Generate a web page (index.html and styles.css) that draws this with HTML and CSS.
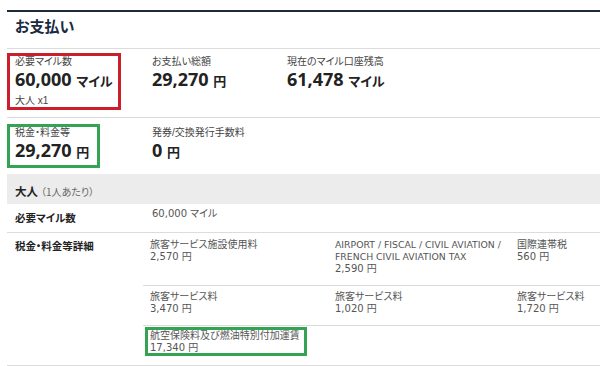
FILE: index.html
```html
<!DOCTYPE html>
<html lang="ja">
<head>
<meta charset="utf-8">
<link rel="stylesheet" href="styles.css">
</head>
<body>
<div class="page">
  <header class="head"><h1>お支払い</h1></header>

  <section class="sum-row r1">
    <div class="cell c1">
      <div class="box red">
        <div class="lbl">必要マイル数</div>
        <div class="num">60,000 <span class="unit">マイル</span></div>
        <div class="sub">大人 x1</div>
      </div>
    </div>
    <div class="cell c2 plain">
      <div class="lbl">お支払い総額</div>
      <div class="num">29,270 <span class="unit">円</span></div>
    </div>
    <div class="cell c3 plain">
      <div class="lbl">現在のマイル口座残高</div>
      <div class="num">61,478 <span class="unit">マイル</span></div>
    </div>
  </section>

  <section class="sum-row r2">
    <div class="cell c1">
      <div class="box green">
        <div class="lbl">税金・料金等</div>
        <div class="num">29,270 <span class="unit">円</span></div>
      </div>
    </div>
    <div class="cell c2 plain">
      <div class="lbl">発券/交換発行手数料</div>
      <div class="num">0 <span class="unit">円</span></div>
    </div>
  </section>

  <div class="band"><strong>大人</strong><span class="per">（1人あたり）</span></div>

  <section class="miles-row">
    <div class="rlabel">必要マイル数</div>
    <div class="rvalue">60,000 マイル</div>
  </section>

  <section class="detail">
    <div class="dlabel">税金・料金等詳細</div>
    <div class="dgrid">
      <div class="drow first">
        <div class="it"><div class="nm">旅客サービス施設使用料</div><div class="amt">2,570 円</div></div>
        <div class="it"><div class="nm en">AIRPORT / FISCAL / CIVIL AVIATION / FRENCH CIVIL AVIATION TAX</div><div class="amt">2,590 円</div></div>
        <div class="it"><div class="nm">国際連帯税</div><div class="amt">560 円</div></div>
      </div>
      <div class="drow">
        <div class="it"><div class="nm">旅客サービス料</div><div class="amt">3,470 円</div></div>
        <div class="it"><div class="nm">旅客サービス料</div><div class="amt">1,020 円</div></div>
        <div class="it"><div class="nm">旅客サービス料</div><div class="amt">1,720 円</div></div>
      </div>
      <div class="drow last">
        <div class="it boxed"><div class="gbox"><div class="nm">航空保険料及び燃油特別付加運賃</div><div class="amt">17,340 円</div></div></div>
      </div>
    </div>
  </section>
</div>
</body>
</html>
```

FILE: styles.css
```css
* { box-sizing: border-box; }
html, body { margin: 0; padding: 0; background: #fff; }
body {
  font-family: "Noto Sans CJK JP", sans-serif;
  font-feature-settings: "palt";
  color: #333;
  overflow: hidden;
}
.page {
  margin: 10px 0 0 7px;
}
.head {
  border-top: 2px solid #1d2a3a;
  border-bottom: 1px solid #dcdcdc;
  height: 39px;
  padding-left: 8px;
}
.head h1 {
  margin: 0;
  font-size: 15px;
  line-height: 28px;
  font-weight: 700;
  color: #1b2a3f;
}
.sum-row {
  display: flex;
  align-items: flex-start;
}
.r1 {
  height: 69px;
  padding-top: 4px;
  border-bottom: 1px solid #dcdcdc;
}
.r2 {
  height: 56px;
  padding-top: 6px;
}
.c1 { width: 145px; }
.c2 { width: 135px; }
.plain { padding-top: 3px; }
.box {
  display: inline-block;
  border: 3px solid;
  padding: 0 5px;
}
.red { border-color: #cc1f2c; }
.green { border-color: #34a353; padding-right: 8px; }
.lbl {
  font-family: "Liberation Sans", "Noto Sans CJK JP", sans-serif;
  font-size: 10px;
  line-height: 11px;
  color: #444;
}
.num {
  font-family: "Open Sans", "Noto Sans CJK JP", sans-serif;
  font-weight: 700;
  font-size: 18px;
  line-height: 25px;
  color: #222;
  white-space: nowrap;
}
.unit {
  font-size: 13px;
}
.sub {
  font-family: "Liberation Sans", "Noto Sans CJK JP", sans-serif;
  font-size: 10px;
  line-height: 12px;
  margin-top: 1px;
  color: #444;
}
.band {
  background: #ececec;
  height: 30px;
  line-height: 30px;
  padding-left: 8px;
}
.band strong {
  font-size: 11.5px;
  color: #222;
}
.band .per {
  font-size: 10px;
  color: #666;
  margin-left: 3px;
}
.miles-row {
  display: flex;
  height: 29px;
  border-bottom: 1px solid #dcdcdc;
}
.rlabel, .dlabel {
  width: 136px;
  padding-left: 8px;
  font-size: 10.5px;
  font-weight: 700;
  color: #222;
}
.rlabel { line-height: 28px; }
.rvalue {
  padding: 4px 0 0 9px;
  font-family: "DejaVu Sans", "Noto Sans CJK JP", sans-serif;
  font-size: 10px;
  line-height: 12px;
  color: #555;
}
.detail {
  display: flex;
  border-bottom: 1px solid #dcdcdc;
}
.dlabel {
  padding-top: 6px;
  line-height: 14px;
}
.dgrid { flex: 1; min-width: 0; }
.drow {
  display: grid;
  grid-template-columns: 185px 182px 1fr;
  height: 40px;
  border-top: 1px solid #dcdcdc;
}
.drow.first { height: 52px; border-top: 0; }
.drow.last { height: 40px; }
.it {
  padding: 5px 7px 0;
  font-family: "DejaVu Sans", "Noto Sans CJK JP", sans-serif;
  font-size: 10px;
  line-height: 11.7px;
  color: #555;
  min-width: 0;
}
.drow.first .it { padding-top: 6px; }
.nm.en {
  font-size: 9.3px;
  line-height: 12px;
}
.it.boxed { padding: 1px 0 0 2px; }
.gbox {
  display: inline-block;
  white-space: nowrap;
  border: 3px solid #34a353;
  padding: 0 4px 0 2px;
}
```
